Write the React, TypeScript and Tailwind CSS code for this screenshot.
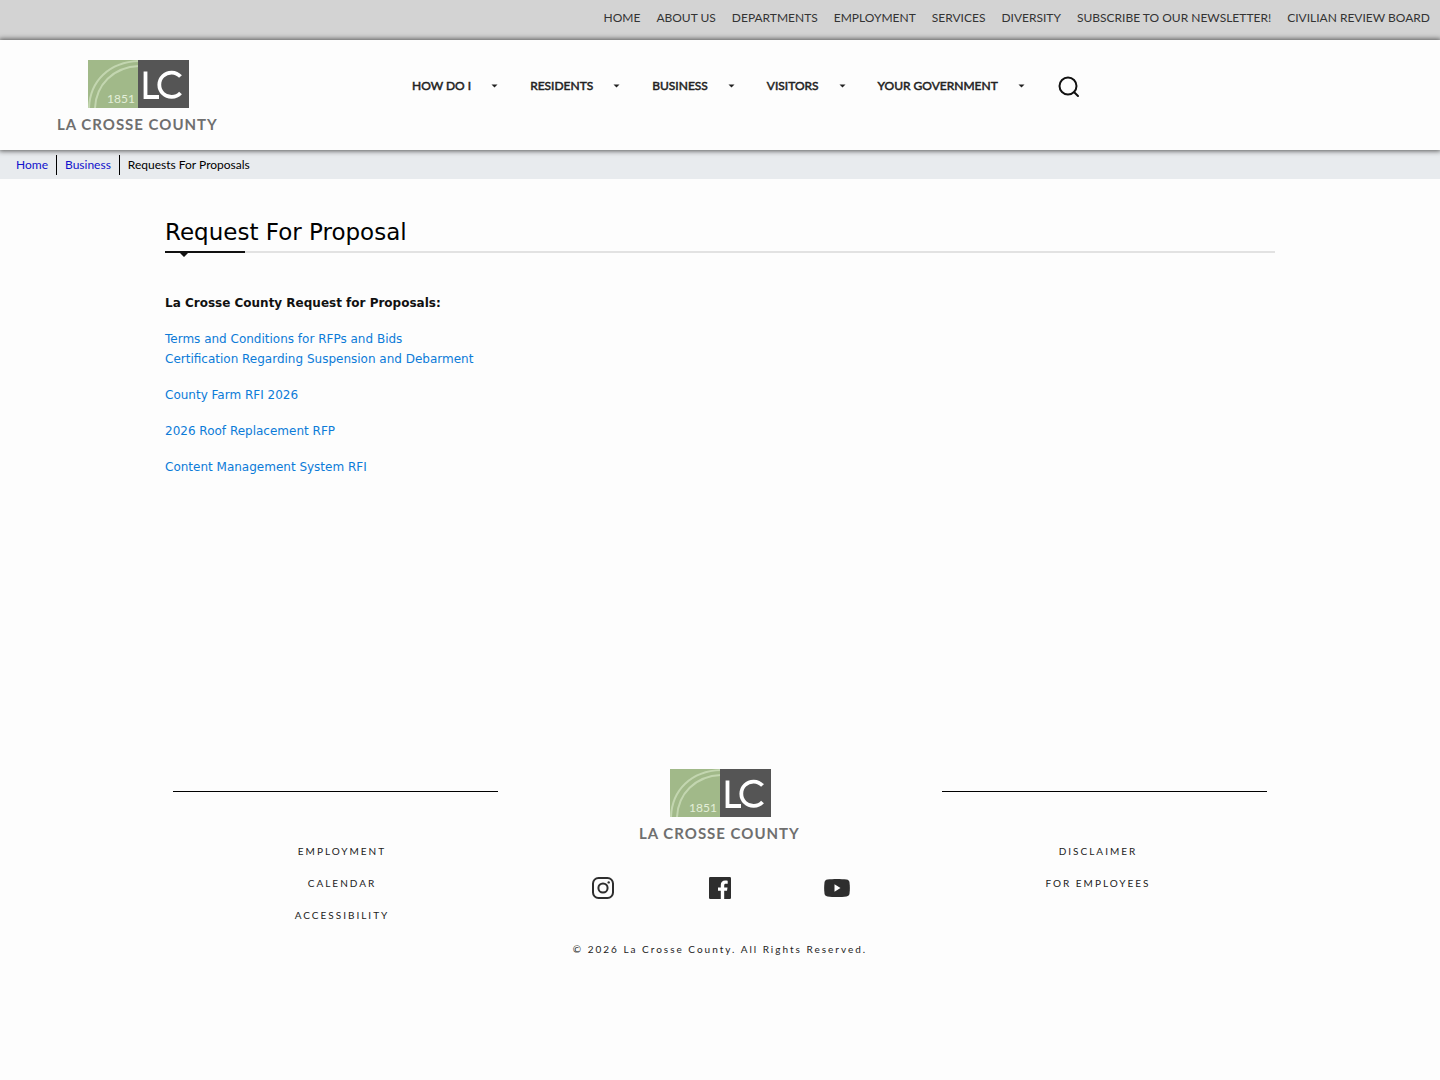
import React from "react";

const topLinks = [
  "HOME",
  "ABOUT US",
  "DEPARTMENTS",
  "EMPLOYMENT",
  "SERVICES",
  "DIVERSITY",
  "SUBSCRIBE TO OUR NEWSLETTER!",
  "CIVILIAN REVIEW BOARD",
];

const mainMenu = ["HOW DO I", "RESIDENTS", "BUSINESS", "VISITORS", "YOUR GOVERNMENT"];

function Logo() {
  return (
    <svg width="164" height="74" viewBox="0 0 164 74" role="img" aria-label="La Crosse County">
      <rect x="32" y="1" width="51" height="48" fill="#a1b989" />
      <path d="M33 49C34 22 53 3 83 2" fill="none" stroke="#c3d6b0" strokeWidth="2" />
      <path d="M39 49C40 26 57 8 83 7" fill="none" stroke="#c3d6b0" strokeWidth="2" />
      <text x="51" y="44" fontSize="12" fill="#e3eed8" fontFamily="Lato, sans-serif">
        1851
      </text>
      <rect x="82" y="1" width="51" height="48" fill="#555555" />
      <path d="M89.500 12.500V38H103" fill="none" stroke="#fff" strokeWidth="3.800" />
      <path d="M124.500 17.500A12.200 12.200 0 1 0 124.500 34" fill="none" stroke="#fff" strokeWidth="3.800" />
      <text x="1" y="71" fontSize="15" fontWeight="700" letterSpacing="1" fill="#6f6f6f" fontFamily="Lato, sans-serif">
        LA CROSSE COUNTY
      </text>
    </svg>
  );
}

function InstagramIcon() {
  return (
    <svg width="26" height="26" viewBox="0 0 26 26" fill="none" stroke="#2e2e2e" strokeWidth="2" aria-hidden="true">
      <rect x="3" y="3" width="20" height="20" rx="5.500" />
      <circle cx="13" cy="13" r="4.600" />
      <circle cx="18.700" cy="7.400" r="1.200" fill="#2e2e2e" stroke="none" />
    </svg>
  );
}

function FacebookIcon() {
  return (
    <svg width="26" height="26" viewBox="0 0 26 26" aria-hidden="true">
      <rect x="2" y="2" width="22" height="22" rx="1.200" fill="#2e2e2e" />
      <path
        d="M13.800 24V15.800H11V12.500H13.800V10.100C13.800 7.200 15.500 5.600 18.100 5.600C19.300 5.600 20.300 5.700 20.700 5.800V8.700H18.900C17.500 8.700 17.200 9.400 17.200 10.400V12.500H20.500L20 15.800H17.200V24Z"
        fill="#fff"
      />
    </svg>
  );
}

function YoutubeIcon() {
  return (
    <svg width="26" height="26" viewBox="0 0 26 26" aria-hidden="true">
      <path
        d="M3.500 4.600C9 3.800 17 3.800 22.500 4.600C24.400 4.900 25.200 5.800 25.500 7.500C26 11 26 15 25.500 18.500C25.200 20.200 24.400 21.100 22.500 21.400C17 22.200 9 22.200 3.500 21.400C1.600 21.100 0.800 20.200 0.500 18.500C0 15 0 11 0.500 7.500C0.800 5.800 1.600 4.900 3.500 4.600Z"
        fill="#2e2e2e"
      />
      <path d="M10.500 9.300V16.700L16.500 13Z" fill="#fff" />
    </svg>
  );
}

function FooterLinks({ items }: { items: string[] }) {
  return (
    <ul className="flex flex-col items-center text-[10px] leading-4 tracking-[2px] text-[#222]">
      {items.map((t) => (
        <li key={t} className="pb-4">
          <a href="#">{t}</a>
        </li>
      ))}
    </ul>
  );
}

export default function App() {
  return (
    <div className="min-h-screen bg-[#fdfdfd] font-['Lato',sans-serif] text-[12px] text-black">
      <nav aria-label="Utility" className="flex h-10 justify-end gap-4 bg-[#d3d3d3] px-[10px] pt-[9px] leading-[18px] text-[#333]">
        {topLinks.map((t) => (
          <a key={t} href="#" className="whitespace-nowrap">
            {t}
          </a>
        ))}
      </nav>

      <header className="relative flex h-[110px] bg-[#fdfdfd] shadow-[0_0_5px_1px_#555]">
        <a href="#" className="ml-14 mt-[19px]">
          <Logo />
        </a>
        <nav aria-label="Main" className="ml-48 flex h-[92px] items-center">
          {mainMenu.map((t) => (
            <button
              key={t}
              type="button"
              className="mr-8 flex items-center gap-5 whitespace-nowrap text-[#222] [-webkit-text-stroke:0.5px_#222]"
            >
              {t}
              <svg width="7" height="4" viewBox="0 0 7 4" aria-hidden="true">
                <path d="M0.500 0.500H6.500L3.500 3.500Z" fill="#222" />
              </svg>
            </button>
          ))}
          <button type="button" aria-label="Search">
            <svg width="24" height="24" viewBox="0 0 24 24" fill="none" stroke="#111" strokeWidth="2" strokeLinecap="round">
              <circle cx="11" cy="12" r="8.500" />
              <path d="M17.200 18.200L21 22" />
            </svg>
          </button>
        </nav>
      </header>

      <nav aria-label="Breadcrumb" className="bg-[#e8ebee] px-2 pb-1 pt-[5px] leading-5">
        <ol className="flex">
          <li className="border-r border-black px-2">
            <a href="#" className="text-[#1111cc]">Home</a>
          </li>
          <li className="border-r border-black px-2">
            <a href="#" className="text-[#1111cc]">Business</a>
          </li>
          <li className="px-2">Requests For Proposals</li>
        </ol>
      </nav>

      <main className="mx-auto min-h-[589px] w-full max-w-[1140px] px-[15px] pt-9 font-['Verdana','DejaVu_Sans',sans-serif] leading-5">
        <div className="relative border-b-2 border-[#e2e2e2] pt-px pb-[3px]">
          <h1 className="text-[23px] leading-8">Request For Proposal</h1>
          <svg className="absolute left-0 top-9" width="80" height="6" viewBox="0 0 80 6" aria-hidden="true">
            <path d="M0 0H80V2H23L19 6L15 2H0Z" fill="#111" />
          </svg>
        </div>
        <p className="mt-10 font-bold text-[#111]">La Crosse County Request for Proposals:</p>
        <div className="mt-4 flex flex-col items-start text-[#0c7bd8]">
          <a href="#">Terms and Conditions for RFPs and Bids</a>
          <a href="#">Certification Regarding Suspension and Debarment</a>
          <a href="#" className="mt-4">County Farm RFI 2026</a>
          <a href="#" className="mt-4">2026 Roof Replacement RFP</a>
          <a href="#" className="mt-4">Content Management System RFI</a>
        </div>
      </main>

      <footer className="mx-auto w-full max-w-[1134px]">
        <div className="flex justify-between px-5">
          <div className="mt-[23px] w-[325px] border-t border-black" />
          <Logo />
          <div className="mt-[23px] w-[325px] border-t border-black" />
        </div>
        <div className="grid grid-cols-3 pt-px">
          <FooterLinks items={["EMPLOYMENT", "CALENDAR", "ACCESSIBILITY"]} />
          <div className="flex flex-col items-center">
            <div className="grid w-[351px] grid-cols-3 justify-items-center pt-8">
              <a href="#" aria-label="Instagram"><InstagramIcon /></a>
              <a href="#" aria-label="Facebook"><FacebookIcon /></a>
              <a href="#" aria-label="YouTube"><YoutubeIcon /></a>
            </div>
            <p className="whitespace-nowrap pt-10 text-[10px] leading-4 tracking-[2px] text-[#222]">
              © 2026 La Crosse County. All Rights Reserved.
            </p>
          </div>
          <FooterLinks items={["DISCLAIMER", "FOR EMPLOYEES"]} />
        </div>
      </footer>
    </div>
  );
}
